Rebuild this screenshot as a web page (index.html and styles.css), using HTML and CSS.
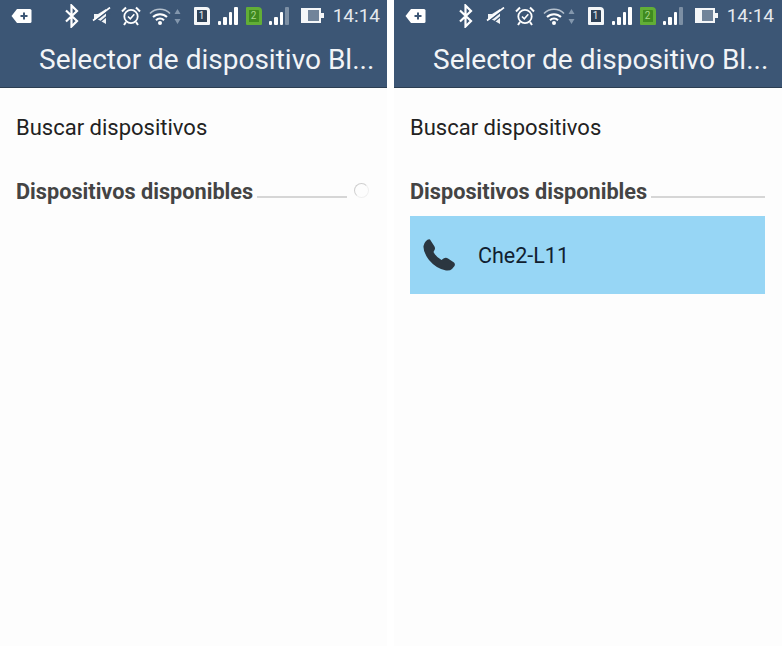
FILE: index.html
```html
<!DOCTYPE html>
<html lang="en">
<head>
    <meta charset="UTF-8">
    <meta name="viewport" content="width=device-width, initial-scale=1.0">
    <title>Selector de dispositivo Bluetooth</title>
    <link rel="stylesheet" href="styles.css">
</head>
<body>
    <svg class="sprites" width="0" height="0">
        <symbol id="i-notif" viewBox="0 0 21 16">
            <path d="M6 1h13a1.500 1.500 0 0 1 1.500 1.500v11A1.500 1.500 0 0 1 19 15H6L0.500 8z" fill="#fff"/>
            <path d="M13 4.500v7M9.500 8h7" stroke="#3c5675" stroke-width="2" fill="none"/>
        </symbol>
        <symbol id="i-bt" viewBox="0 0 16 24">
            <path d="M2 6.500l11 10.500-5.500 5.500V1.500l5.500 5.500L2 17.500" stroke="#fff" stroke-width="2.200" fill="none"/>
        </symbol>
        <symbol id="i-mute" viewBox="0 0 20 18">
            <path d="M2 7h4L14 2v15L7 13H2z" fill="#f0f3f6"/>
            <path d="M1 15.500L19 1.500" stroke="#3c5675" stroke-width="1.600"/>
            <path d="M1 13.500L18 .5" stroke="#fff" stroke-width="1.600"/>
            <path d="M5 17.500L19 6" stroke="#3c5675" stroke-width="1.200"/>
        </symbol>
        <symbol id="i-alarm" viewBox="0 0 20 20">
            <circle cx="10" cy="10.500" r="6.700" stroke="#fff" stroke-width="1.800" fill="none"/>
            <path d="M7 10.500l2.300 2.300 4-4.500" stroke="#fff" stroke-width="1.600" fill="none"/>
            <path d="M1 5.500L5 1.500M19 5.500L15 1.500M5 16l-2 3M15 16l2 3" stroke="#fff" stroke-width="2" fill="none"/>
        </symbol>
        <symbol id="i-wifi" viewBox="0 0 32 18">
            <path d="M1 6.500a14 14 0 0 1 20 0" stroke="#b4c0cd" stroke-width="1.600" fill="none"/>
            <path d="M4 10a10 10 0 0 1 14 0M7 13.200a5.500 5.500 0 0 1 8 0" stroke="#fff" stroke-width="2" fill="none"/>
            <circle cx="11" cy="16" r="2" fill="#fff"/>
            <path d="M28.500 2l3 5h-6zM28.500 17l3-5h-6z" fill="#8397ad"/>
        </symbol>
        <symbol id="i-phone" viewBox="0 0 32 32">
            <path d="M7 .5L11.500 7.500Q12.500 9.500 11.500 11L10.500 13Q13 18 18.500 21L20.500 19.500Q23 18 25 19.500L31 23.500Q32.500 25 31.500 27L29 30Q27 32 23 31.500Q13 29.500 6 21Q0 13 .5 7Q1 4 3 2L4.500 .8Q6 0 7 .5Z" fill="#2b3640"/>
        </symbol>
    </svg>

    <div class="screens">
        <section class="screen">
            <header class="appbar">
                <div class="status">
                    <svg class="ic-notif"><use href="#i-notif"/></svg>
                    <div class="status-right">
                        <svg class="ic-bt"><use href="#i-bt"/></svg>
                        <svg class="ic-mute"><use href="#i-mute"/></svg>
                        <svg class="ic-alarm"><use href="#i-alarm"/></svg>
                        <svg class="ic-wifi"><use href="#i-wifi"/></svg>
                        <span class="sim">1</span>
                        <span class="bars"><i class="b1"></i><i class="b2"></i><i class="b3"></i><i class="b4"></i></span>
                        <span class="sim sim-active">2</span>
                        <span class="bars bars-weak"><i class="b1"></i><i class="b2"></i><i class="b3"></i><i class="b4"></i></span>
                        <span class="battery"><i></i></span>
                        <span class="clock">14:14</span>
                    </div>
                </div>
                <h1 class="title">Selector de dispositivo Bl...</h1>
            </header>
            <div class="action">Buscar dispositivos</div>
            <div class="section-head">
                <h2>Dispositivos disponibles</h2>
                <span class="rule"></span>
                <span class="spinner"></span>
            </div>
        </section>

        <section class="screen">
            <header class="appbar">
                <div class="status">
                    <svg class="ic-notif"><use href="#i-notif"/></svg>
                    <div class="status-right">
                        <svg class="ic-bt"><use href="#i-bt"/></svg>
                        <svg class="ic-mute"><use href="#i-mute"/></svg>
                        <svg class="ic-alarm"><use href="#i-alarm"/></svg>
                        <svg class="ic-wifi"><use href="#i-wifi"/></svg>
                        <span class="sim">1</span>
                        <span class="bars"><i class="b1"></i><i class="b2"></i><i class="b3"></i><i class="b4"></i></span>
                        <span class="sim sim-active">2</span>
                        <span class="bars bars-weak"><i class="b1"></i><i class="b2"></i><i class="b3"></i><i class="b4"></i></span>
                        <span class="battery"><i></i></span>
                        <span class="clock">14:14</span>
                    </div>
                </div>
                <h1 class="title">Selector de dispositivo Bl...</h1>
            </header>
            <div class="action">Buscar dispositivos</div>
            <div class="section-head">
                <h2>Dispositivos disponibles</h2>
                <span class="rule"></span>
            </div>
            <div class="device">
                <svg class="ic-phone"><use href="#i-phone"/></svg>
                <span>Che2-L11</span>
            </div>
        </section>
    </div>
</body>
</html>
```

FILE: styles.css
```css
body {
    margin: 0;
    background-color: #ffffff;
    font-family: 'Roboto', sans-serif;
}

.sprites {
    display: block;
    height: 0;
}

.screens {
    display: flex;
    gap: 7px;
    height: 646px;
    overflow: hidden;
}

.screen {
    width: 387px;
    flex: none;
    background-color: #fdfdfd;
}

.screen + .screen {
    width: 388px;
}

.appbar {
    height: 87px;
    background-color: #3c5675;
    border-bottom: 1px solid #2c3e52;
}

.status {
    height: 31px;
    display: flex;
    align-items: center;
    justify-content: space-between;
    padding-left: 11px;
    padding-right: 7px;
}

.screen + .screen .status {
    padding-right: 8px;
}

.status-right {
    display: flex;
    align-items: center;
}

.ic-notif {
    width: 21px;
    height: 16px;
}

.ic-bt {
    width: 16px;
    height: 24px;
    margin-right: 12px;
}

.ic-mute {
    width: 20px;
    height: 18px;
    margin-right: 9px;
}

.ic-alarm {
    width: 20px;
    height: 20px;
    margin-right: 8px;
}

.ic-wifi {
    width: 32px;
    height: 18px;
    margin-right: 13px;
}

.sim {
    width: 16px;
    height: 18px;
    box-sizing: border-box;
    background-color: #2f4257;
    color: #e8ecf0;
    border: 3px solid #f4f6f8;
    font-size: 10px;
    line-height: 12px;
    text-align: center;
    margin-right: 8px;
    border-radius: 1px 4px 1px 1px;
}

.sim-active {
    background-color: #3f8a1f;
    border-color: #62ae36;
    color: #a8d88a;
    margin-right: 7px;
}

.bars {
    display: flex;
    align-items: flex-end;
    gap: 2px;
    height: 18px;
    margin-right: 8px;
}

.bars i {
    display: block;
    width: 3.5px;
    border-radius: 1px;
    background-color: #ffffff;
}

.bars .b1 {
    height: 4px;
}

.bars .b2 {
    height: 8px;
}

.bars .b3 {
    height: 13px;
}

.bars .b4 {
    height: 18px;
}

.bars-weak {
    margin-right: 12px;
}

.bars-weak .b4 {
    background-color: #7c8fa4;
}

.battery {
    position: relative;
    display: block;
    width: 20px;
    height: 15px;
    background-color: #f4f6f8;
    margin-right: 12px;
    padding: 2px 2px 2px 7px;
    box-sizing: border-box;
}

.battery i {
    display: block;
    height: 100%;
    background-color: #71849a;
}

.battery::after {
    content: "";
    position: absolute;
    right: -3px;
    top: 5px;
    width: 3px;
    height: 5px;
    background-color: #f4f6f8;
}

.clock {
    color: #e4e9ee;
    font-size: 19px;
}

.title {
    margin: 0;
    padding-left: 39px;
    padding-top: 1px;
    color: #f2f4f7;
    font-size: 28px;
    font-weight: 400;
    line-height: 56px;
    white-space: nowrap;
}

.action {
    padding-left: 16px;
    margin-top: 26px;
    color: #222222;
    font-size: 22px;
    line-height: 28px;
}

.section-head {
    display: flex;
    align-items: center;
    margin-top: 36px;
    padding-left: 16px;
    height: 28px;
}

.section-head h2 {
    margin: 0;
    color: #444444;
    font-size: 21.7px;
    font-weight: 700;
    line-height: 28px;
    white-space: nowrap;
}

.rule {
    width: 90px;
    height: 2px;
    margin-left: 4px;
    margin-top: 10px;
    background-color: #d6d6d6;
}

.screen + .screen .rule {
    width: 114px;
}

.spinner {
    width: 15px;
    height: 15px;
    box-sizing: border-box;
    margin-left: 7px;
    margin-bottom: 3px;
    border: 1px solid #f0f0f0;
    border-top-color: #cfcfcf;
    border-left-color: #cfcfcf;
    border-radius: 50%;
}

.device {
    display: flex;
    align-items: center;
    height: 78px;
    margin: 10px 17px 0 16px;
    padding-left: 13px;
    background-color: #97d6f5;
    color: #102030;
    font-size: 21.500px;
}

.ic-phone {
    width: 32px;
    height: 32px;
    margin-right: 23px;
}
```
